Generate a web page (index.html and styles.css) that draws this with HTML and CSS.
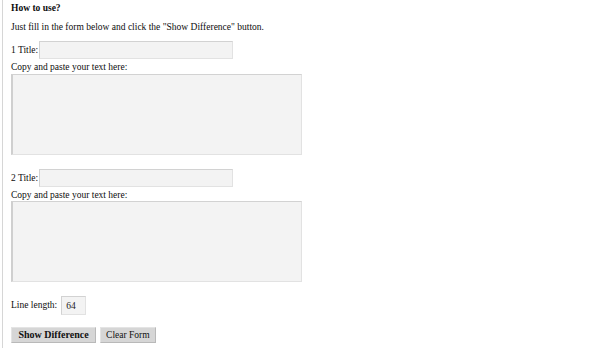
FILE: index.html
```html
<!DOCTYPE html>
<html lang="en">
<head>
    <meta charset="UTF-8">
    <title>Text Difference</title>
    <link rel="stylesheet" href="styles.css">
</head>
<body>
    <div class="pagina">
        <h3 class="titulo">How to use?</h3>
        <p class="intro">Just fill in the form below and click the "Show Difference" button.</p>
        <form class="diff-form" onsubmit="return false">
            <div class="fila fila-uno">
                <label for="titulo1">1 Title:</label>
                <input type="text" id="titulo1" class="campo-titulo">
            </div>
            <label class="etiqueta" for="texto1">Copy and paste your text here:</label>
            <textarea id="texto1" class="texto"></textarea>

            <div class="fila fila-dos">
                <label for="titulo2">2 Title:</label>
                <input type="text" id="titulo2" class="campo-titulo">
            </div>
            <label class="etiqueta" for="texto2">Copy and paste your text here:</label>
            <textarea id="texto2" class="texto"></textarea>

            <div class="fila fila-largo">
                <label for="largo">Line length:</label>
                <input type="text" id="largo" class="campo-largo" value="64">
            </div>

            <div class="botones">
                <input type="submit" class="boton boton-fuerte" value="Show Difference">
                <input type="reset" class="boton" value="Clear Form">
            </div>
        </form>
    </div>
</body>
</html>
```

FILE: styles.css
```css
html, body {
    margin: 0;
    padding: 0;
    background: #fff;
}

body {
    font-family: "Liberation Serif", "Times New Roman", serif;
    font-size: 9.5px;
    line-height: 11px;
    color: #0d0d0d;
}

.pagina {
    margin-left: 2px;
    border-left: 1px solid #d6d6d6;
    padding-left: 8px;
    min-height: 348px;
    box-sizing: border-box;
}

.titulo {
    margin: 0;
    padding-top: 3px;
    font-size: 9.5px;
    line-height: 11px;
    font-weight: bold;
}

.intro {
    margin: 8px 0 0 0;
}

.diff-form {
    display: flex;
    flex-direction: column;
    align-items: flex-start;
}

.fila {
    display: flex;
    align-items: center;
    gap: 1px;
}

.fila-uno {
    margin-top: 8px;
}

.fila-dos {
    margin-top: 14px;
}

.fila-largo {
    margin-top: 14px;
    gap: 4px;
}

.campo-titulo,
.campo-largo,
.texto {
    font-family: inherit;
    font-size: 9.5px;
    background: #f3f3f3;
    border: 1px solid #e2e2e2;
    border-top-color: #d2d2d2;
    border-left-color: #d2d2d2;
    box-sizing: border-box;
    margin: 0;
    outline: none;
}

.campo-titulo {
    width: 194px;
    height: 18px;
    padding: 0 3px;
}

.campo-largo {
    width: 25px;
    height: 19px;
    padding: 0 4px;
    color: #222;
}

.etiqueta {
    margin-top: 3px;
}

.texto {
    display: block;
    width: 291px;
    height: 81px;
    resize: none;
    margin-top: 1px;
    border-left: 2px solid #cfcfcf;
}

.fila-dos + .etiqueta + .texto {
    margin-top: 0;
}

.botones {
    margin-top: 12px;
    display: flex;
    gap: 4px;
}

.boton {
    font-family: inherit;
    font-size: 9.5px;
    color: #111;
    background: #d6d6d6;
    border: 1px solid #b9b9b9;
    border-top-color: #e4e4e4;
    border-left-color: #e4e4e4;
    height: 16px;
    padding: 0 5px;
    margin: 0;
    line-height: 14px;
}

.boton-fuerte {
    font-weight: bold;
    font-size: 10px;
    padding: 0 6.5px;
}
```
